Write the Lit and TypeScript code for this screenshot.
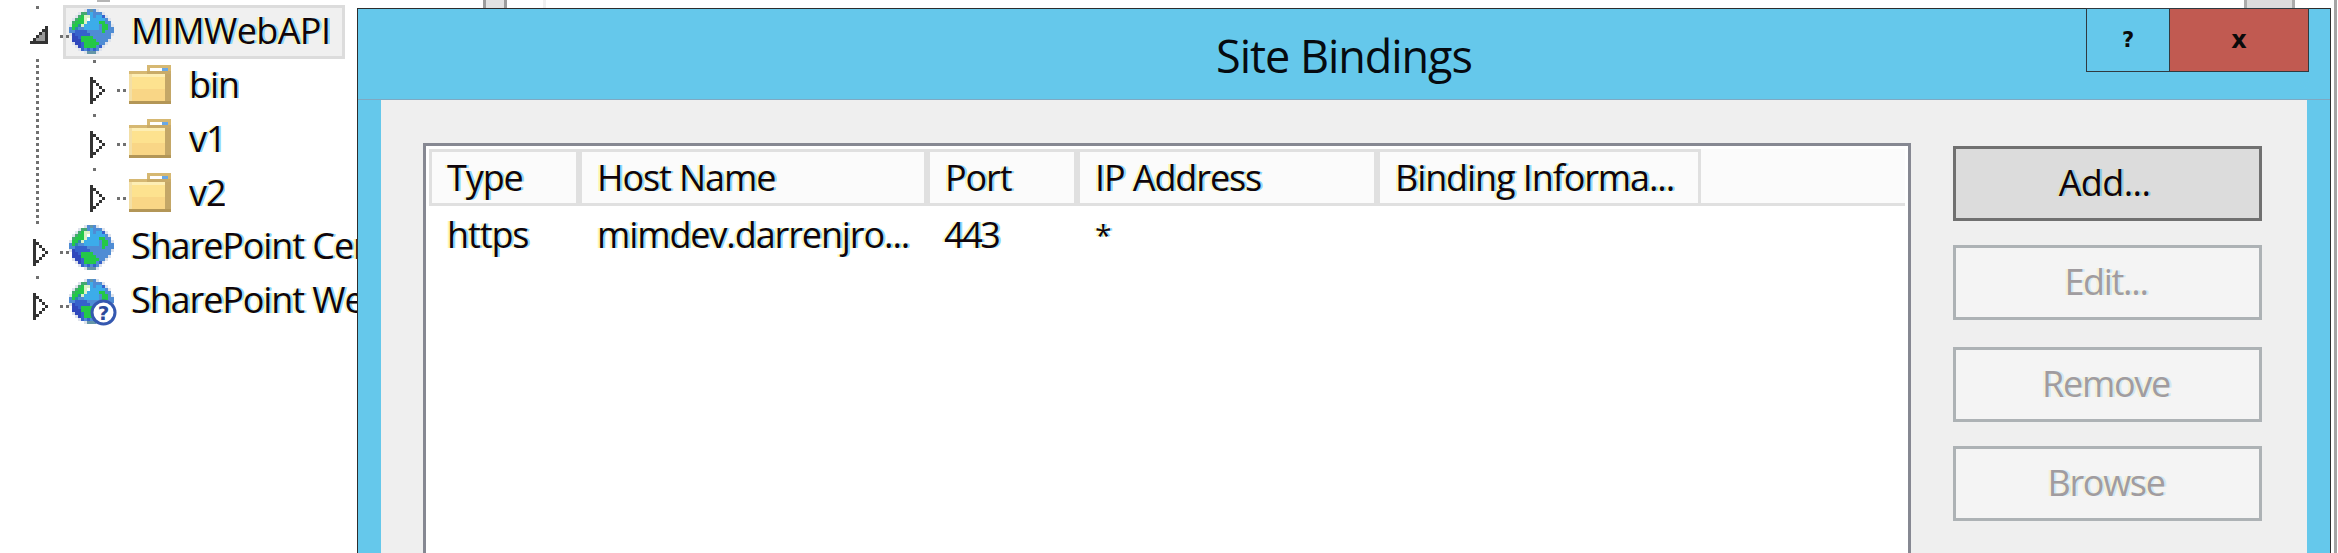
import { LitElement, html, css, svg } from "lit";
import { customElement } from "lit/decorators.js";

const GLOBE = [
  ".....lbtbl.....",
  "...lggbcbbbl...",
  "..lgGwwcbccBl..",
  ".lgGGwWcccccbl.",
  ".gGGGwccccGGbb.",
  "lGGdwcccccbGGbl",
  "bGdbbcccccbGGbb",
  "bbBBBBbbbbbGbbb",
  "lDBBBBBbbbbbbbl",
  ".DDBGGGGbbbbbb.",
  ".DDDGGGGGbbbbl.",
  ".lDDBGGGGGbbl..",
  "..lDBGGGGbBl...",
  "...lBbBbBbl....",
  ".....ltttl.....",
];
const GLOBE_COLORS: Record<string, string> = {
  l: "#dde2ec", b: "#4f8cd4", c: "#3cacea", g: "#46a870", G: "#24c848",
  w: "#dcf2c6", W: "#ffffff", d: "#2e88a8", B: "#3662cc", D: "#3048bc", t: "#6496a8",
};

const FOLDER = [
  "......tttttttt",
  "......twwwwbbt",
  "ttttttssssssss",
  "hlllllllllllrr",
  "hfffffffffffrr",
  "hfffffffffffrr",
  "hfffffffffffrr",
  "hfffffffffffrr",
  "hmmmmmmmmmmmrr",
  "hmmmmmmmmmmmrr",
  "hmmmmmmmmmmmrr",
  "hmmmmmmmmmmmrr",
  "oooooooooooooo",
];
const FOLDER_COLORS: Record<string, string> = {
  t: "#d6b872", w: "#ffffff", b: "#69a8e6", s: "#c9ab68", h: "#f3dfa6",
  l: "#fdeeb4", f: "#fde28f", m: "#f9d686", r: "#c4a767", o: "#b39657",
};

const CLOSED = [
  "#....",
  "##...",
  "#.#..",
  "#..#.",
  "#...#",
  "#..#.",
  "#.#..",
  "##...",
  "#....",
];
const OPEN = [
  ".....#",
  "....##",
  "...#o#",
  "..#oo#",
  ".#ooo#",
  "######",
];
const ARROW_COLORS: Record<string, string> = { "#": "#333333", o: "#9a9a9a" };

function pixels(rows: string[], colors: Record<string, string>) {
  const w = rows[0].length * 3;
  const h = rows.length * 3;
  const cells: unknown[] = [];
  rows.forEach((row, y) => {
    [...row].forEach((c, x) => {
      if (colors[c]) {
        cells.push(svg`<rect x=${x * 3} y=${y * 3} width="3" height="3" fill=${colors[c]}></rect>`);
      }
    });
  });
  return { w, h, cells };
}

function pixelIcon(rows: string[], colors: Record<string, string>, extra: unknown = null) {
  const p = pixels(rows, colors);
  return html`<svg class="pix" width=${p.w} height=${p.h} viewBox="0 0 ${p.w} ${p.h}" shape-rendering="crispEdges">${p.cells}${extra}</svg>`;
}

const BADGE = svg`<g shape-rendering="auto">
  <circle cx="34.5" cy="33.5" r="11.5" fill="#ffffff" stroke="#3558b0" stroke-width="3"></circle>
  <text x="34.5" y="41" text-anchor="middle" font-family="DejaVu Sans" font-weight="700" font-size="20" fill="#2c4a9c">?</text>
</g>`;

type Row = { label: string; level: number; kind: "globe" | "folder" | "globe-q"; open?: boolean; selected?: boolean; tick?: boolean };

const ROWS: Row[] = [
  { label: "MIMWebAPI", level: 0, kind: "globe", open: true, selected: true, tick: true },
  { label: "bin", level: 1, kind: "folder", tick: true },
  { label: "v1", level: 1, kind: "folder", tick: true },
  { label: "v2", level: 1, kind: "folder", tick: true },
  { label: "SharePoint Central Administration v4", level: 0, kind: "globe" },
  { label: "SharePoint Web Services", level: 0, kind: "globe-q", tick: true },
];

const COLS = ["Type", "Host Name", "Port", "IP Address", "Binding Informa..."];
const VALUES = ["https", "mimdev.darrenjro...", "443", "*", ""];

@customElement("app-root")
export class AppRoot extends LitElement {
  static styles = css`
    :host {
      display: block;
      position: relative;
      width: 2338px;
      height: 553px;
      overflow: hidden;
      background: #fff;
      font-family: "Open Sans", "Noto Sans", sans-serif;
      font-size: 36px;
      color: #10060c;
    }
    .pix { display: block; flex: none; overflow: visible; }
    .clear { text-shadow: -2px 0 #fff6b0, 2px 0 #8fd8ff; letter-spacing: -1.1px; }

    .stub { position: absolute; top: 0; height: 8px; box-sizing: border-box; }
    .stub.a { left: 483px; width: 24px; background: #e2e2e2; border: solid #9c9c9c; border-width: 0 3px; }
    .stub.b { left: 543px; width: 3px; background: #f0f0f0; }
    .stub.c { left: 2244px; width: 51px; background: #dcdcdc; border: solid #ababab; border-width: 0 3px; }
    .stub.d { left: 97px; width: 13px; height: 2px; background: #b5b5b5; }
    .edge { position: absolute; top: 0; bottom: 0; left: 2334px; width: 3px; background: #a4a4a4; }

    .tree { padding-top: 5px; position: relative; width: 357px; overflow: hidden; }
    .vline {
      position: absolute; left: 36px; top: 59px; width: 3px; height: 166px;
      background: repeating-linear-gradient(#707070 0 3px, transparent 3px 6px);
    }
    .row { position: relative; display: flex; align-items: flex-start; height: 54px; box-sizing: border-box; }
    .row.l0 { padding-left: 33px; }
    .row.l1 { padding-left: 90px; }
    .row .tick { position: absolute; top: 1px; width: 3px; height: 3px; background: #707070; }
    .row.l0 .tick { left: 36px; }
    .row.l1 .tick { left: 93px; }
    .row.sel::before {
      content: ""; position: absolute; left: 63px; top: 0; width: 282px; height: 54px;
      box-sizing: border-box; background: #f0f0f0; border: 3px solid #dcdcdc;
    }
    .exp { margin-top: 18px; position: relative; }
    .exp.open { margin-top: 21px; margin-left: -3px; }
    .dash {
      margin: 30px 0 0 12px; width: 9px; height: 3px; flex: none; position: relative;
      background: linear-gradient(90deg, #707070 0 3px, transparent 3px 6px, #707070 6px 9px);
    }
    .icon { position: relative; margin-top: 4px; flex: none; }
    .icon.folder { margin-top: 6px; margin-left: 3px; }
    .label {
      position: relative; flex: 0 1 auto; min-width: 0; overflow: hidden; margin-left: 17px;
      line-height: 50px; white-space: nowrap;
    }
    .sel .label { margin-top: 1px; letter-spacing: -0.6px; }
    .l1 .label { margin-left: 18px; margin-top: 1px; }

    .dialog {
      position: absolute; left: 357px; top: 8px; width: 1974px; height: 620px;
      box-sizing: border-box; display: flex; flex-direction: column;
      background: #65c8eb; border: solid #2d2d2d; border-width: 1px 1px 0 1px;
    }
    .titlebar {
      position: relative; flex: none; height: 91px; display: flex; justify-content: center;
      box-shadow: inset 0 -1px 0 #7fa9c2;
    }
    .title { font-size: 45px; line-height: 93px; height: 91px; color: #060b10; letter-spacing: -1.05px; }
    .caption { position: absolute; top: -1px; right: 21px; display: flex; height: 64px; }
    .cap {
      box-sizing: border-box; display: flex; align-items: center; justify-content: center;
      border: 1px solid #2f3a40; font-family: "DejaVu Sans", sans-serif; font-weight: 700;
      font-size: 21px; color: #0a0a0a; line-height: 1;
    }
    .cap.help { width: 83px; border-right: 0; }
    .cap.close { width: 140px; background: #c15a51; font-size: 24px; }

    .body {
      flex: 1; margin: 0 23px 0 23px; background: #efefef; padding: 43px 45px 0 42px;
      display: flex; gap: 42px;
    }
    .list {
      flex: none; width: 1488px; height: 500px; box-sizing: border-box;
      border: 3px solid #868892; background: #fff; padding: 3px 3px 0 3px;
    }
    .head { display: flex; background: #e0e0e0; padding: 3px 0 3px 3px; gap: 6px; }
    .c0 { width: 144px; } .c1 { width: 342px; } .c2 { width: 144px; }
    .c3 { width: 294px; } .c4 { width: 318px; }
    .hcell {
      box-sizing: border-box; height: 51px; background: #fbfbfb; padding-left: 15px;
      line-height: 51px; white-space: nowrap; overflow: hidden;
    }
    .filler { flex: 1; margin: -3px 0 0 -3px; background: #fbfbfb; }
    .data { display: flex; gap: 6px; padding: 0 0 0 3px; }
    .dcell {
      box-sizing: border-box; padding-left: 15px; line-height: 46px; padding-top: 6px;
      white-space: nowrap; overflow: hidden;
    }
    .dcell.c2 { letter-spacing: -2.4px; padding-left: 14px; }
    .dcell.c3 { font-size: 30px; }

    .buttons { flex: none; width: 309px; padding-top: 3px; display: flex; flex-direction: column; gap: 24px; }
    .btn {
      box-sizing: border-box; height: 75px; display: flex; align-items: center; justify-content: center;
      border: 3px solid #adb2b5; background: #f4f4f4; color: #a09ca0; padding: 0 3px 3px 0;
    }
    .btn span { letter-spacing: -1.3px; text-shadow: -2px 0 #f8f1d4, 2px 0 #cfe8f6; }
    .btn.active { border-color: #707070; background: #dcdcdc; color: #10060c; }
    .btn.active span { text-shadow: -2px 0 #e8dfa8, 2px 0 #90c8e8; letter-spacing: -0.6px; padding-right: 3px; }
    .btn.gap { margin-top: 3px; }
  `;

  private renderRow(r: Row) {
    const cls = `row l${r.level}${r.selected ? " sel" : ""}`;
    const exp = r.open ? pixelIcon(OPEN, ARROW_COLORS) : pixelIcon(CLOSED, ARROW_COLORS);
    const icon =
      r.kind === "folder"
        ? pixelIcon(FOLDER, FOLDER_COLORS)
        : pixelIcon(GLOBE, GLOBE_COLORS, r.kind === "globe-q" ? BADGE : null);
    return html`<div class=${cls}>
      ${r.tick ? html`<i class="tick"></i>` : null}
      <div class="exp ${r.open ? "open" : ""}">${exp}</div>
      <div class="dash"></div>
      <div class="icon ${r.kind === "folder" ? "folder" : ""}">${icon}</div>
      <div class="label clear">${r.label}</div>
    </div>`;
  }

  render() {
    return html`
      <div class="tree">
        <div class="vline"></div>
        ${ROWS.map((r) => this.renderRow(r))}
      </div>
      <i class="stub a"></i><i class="stub b"></i><i class="stub c"></i><i class="stub d"></i>
      <i class="edge"></i>
      <div class="dialog">
        <div class="titlebar">
          <div class="title">Site Bindings</div>
          <div class="caption">
            <div class="cap help">?</div>
            <div class="cap close">x</div>
          </div>
        </div>
        <div class="body">
          <div class="list">
            <div class="head">
              ${COLS.map((c, i) => html`<div class="hcell clear c${i}">${c}</div>`)}
              <div class="filler"></div>
            </div>
            <div class="data">
              ${VALUES.map((v, i) => html`<div class="dcell clear c${i}">${v}</div>`)}
            </div>
          </div>
          <div class="buttons">
            <div class="btn active"><span>Add...</span></div>
            <div class="btn"><span>Edit...</span></div>
            <div class="btn gap"><span>Remove</span></div>
            <div class="btn"><span>Browse</span></div>
          </div>
        </div>
      </div>
    `;
  }
}
